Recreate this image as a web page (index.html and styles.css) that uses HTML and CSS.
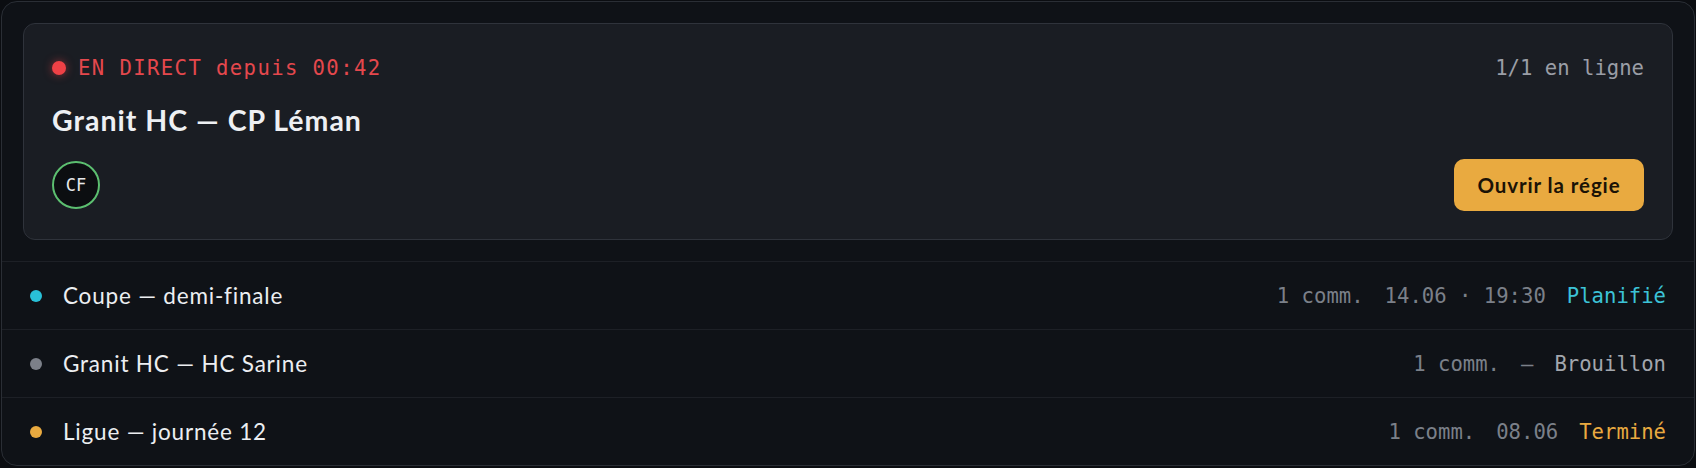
FILE: index.html
```html
<!DOCTYPE html>
<html lang="fr">
<head>
<meta charset="utf-8">
<title>Matchs</title>
<link rel="stylesheet" href="styles.css">
</head>
<body>
<div class="panel">
  <section class="live-wrap">
    <div class="live-card">
      <div class="live-top">
        <div class="live-label"><span class="live-dot"></span><span>EN DIRECT depuis 00:42</span></div>
        <div class="online">1/1 en ligne</div>
      </div>
      <h2 class="live-title">Granit HC — CP Léman</h2>
      <div class="live-actions">
        <div class="avatar">CF</div>
        <button class="btn-primary">Ouvrir la régie</button>
      </div>
    </div>
  </section>
  <ul class="match-list">
    <li class="match">
      <span class="dot dot-cyan"></span>
      <span class="match-name">Coupe — demi-finale</span>
      <span class="meta">1 comm.</span>
      <span class="meta">14.06 · 19:30</span>
      <span class="status status-cyan">Planifié</span>
    </li>
    <li class="match">
      <span class="dot dot-grey"></span>
      <span class="match-name">Granit HC — HC Sarine</span>
      <span class="meta">1 comm.</span>
      <span class="meta">—</span>
      <span class="status status-grey">Brouillon</span>
    </li>
    <li class="match">
      <span class="dot dot-amber"></span>
      <span class="match-name">Ligue — journée 12</span>
      <span class="meta">1 comm.</span>
      <span class="meta">08.06</span>
      <span class="status status-amber">Terminé</span>
    </li>
  </ul>
</div>
</body>
</html>
```
FILE: styles.css
```css
* { box-sizing: border-box; }
html, body { margin: 0; padding: 0; }
body {
  background: #0b0d11;
  padding: 1px 1px 0;
  font-family: Lato, "Noto Sans", sans-serif;
}
.panel {
  background: #0f1217;
  border: 1px solid #2a2e35;
  border-radius: 16px;
  overflow: hidden;
}
.live-wrap {
  padding: 21px;
}
.live-card {
  background: #1a1d23;
  border: 1px solid #2f333b;
  border-radius: 12px;
  padding: 28px;
  display: flex;
  flex-direction: column;
}
.live-top {
  display: flex;
  align-items: center;
  justify-content: space-between;
  height: 32px;
  font-family: "DejaVu Sans Mono", "Liberation Mono", monospace;
  font-size: 20.6px;
}
.live-label {
  display: flex;
  align-items: center;
  gap: 12px;
  color: #e5484d;
  letter-spacing: 1.4px;
}
.live-dot {
  width: 14px;
  height: 14px;
  border-radius: 50%;
  background: #ef4146;
  box-shadow: 0 0 8px rgba(239, 65, 70, 0.55);
}
.online {
  color: #9a9ea6;
}
.live-title {
  margin: 19px 0 0;
  height: 34px;
  line-height: 34px;
  font-size: 28.5px;
  font-weight: 700;
  letter-spacing: 1px;
  color: #eef0f3;
}
.live-actions {
  margin-top: 22px;
  display: flex;
  align-items: center;
  justify-content: space-between;
  height: 52px;
}
.avatar {
  width: 48px;
  height: 48px;
  border-radius: 50%;
  border: 2px solid #5cbf70;
  background: #0c0e11;
  color: #e6e8eb;
  display: flex;
  align-items: center;
  justify-content: center;
  font-family: "DejaVu Sans Mono", "Liberation Mono", monospace;
  font-size: 17px;
}
.btn-primary {
  height: 52px;
  width: 190px;
  border: 0;
  border-radius: 10px;
  background: #e9aa40;
  color: #1b1306;
  font-family: Lato, "Noto Sans", sans-serif;
  font-weight: 700;
  font-size: 20.5px;
  letter-spacing: 0.9px;
}
.match-list {
  list-style: none;
  margin: 0;
  padding: 0;
}
.match {
  display: flex;
  align-items: center;
  height: 68px;
  padding: 0 28px;
  border-top: 1px solid #1d2026;
  gap: 21px;
  font-family: "DejaVu Sans Mono", "Liberation Mono", monospace;
  font-size: 20.6px;
  color: #7b8089;
}
.dot {
  width: 12px;
  height: 12px;
  border-radius: 50%;
}
.dot-cyan { background: #29c1d8; }
.dot-grey { background: #7c8089; }
.dot-amber { background: #e9aa40; }
.match-name {
  flex: 1;
  font-family: Lato, "Noto Sans", sans-serif;
  font-size: 22.5px;
  letter-spacing: 0.8px;
  color: #eceef1;
}
.status-cyan { color: #3cc3d8; }
.status-grey { color: #a3a7ae; }
.status-amber { color: #e9aa40; }
```
